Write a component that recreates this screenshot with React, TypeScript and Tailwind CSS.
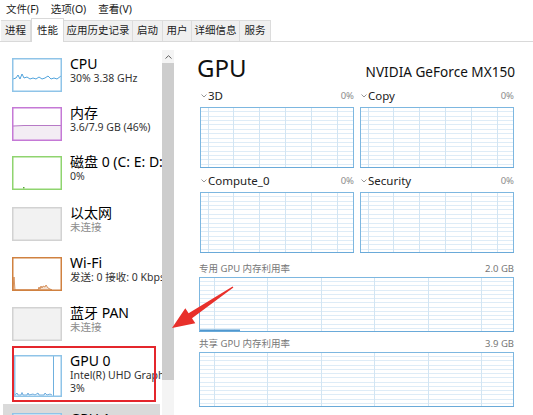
import React from "react";

const tabs = [
  { label: "进程", w: "w-[30px]" },
  { label: "性能", w: "w-[33px]", active: true },
  { label: "应用历史记录", w: "w-[69px]" },
  { label: "启动", w: "w-[30px]" },
  { label: "用户", w: "w-[29px]" },
  { label: "详细信息", w: "w-[48px]" },
  { label: "服务", w: "w-[31px]" },
];

// graph with Task Manager style grid
function Grid({
  w,
  h,
  x0,
  step,
  rows,
  usage,
}: {
  w: number;
  h: number;
  x0: number;
  step: number;
  rows: number;
  usage?: number;
}) {
  const vs: number[] = [];
  for (let x = x0; x < w - 1; x += step) vs.push(Math.round(x) + 0.5);
  const hs: number[] = [];
  for (let i = 1; i < rows; i++) hs.push(Math.round((h * i) / rows) + 0.5);
  return (
    <svg width={w} height={h} className="block">
      <rect x={0} y={0} width={w} height={h} fill="#fff" />
      {hs.map((y) => (
        <line key={"h" + y} x1={0} x2={w} y1={y} y2={y} stroke="#deecf7" />
      ))}
      {vs.map((x) => (
        <line key={"v" + x} x1={x} x2={x} y1={0} y2={h} stroke="#d2e5f3" />
      ))}
      {usage ? (
        <line x1={1} x2={usage} y1={h - 1.5} y2={h - 1.5} stroke="#4f97cf" strokeWidth={2} />
      ) : null}
      <rect x={0.5} y={0.5} width={w - 1} height={h - 1} fill="none" stroke="#7db7e0" />
      <line x1={0} x2={w} y1={h - 0.5} y2={h - 0.5} stroke="#6aaad9" />
    </svg>
  );
}

function Chevron() {
  return (
    <svg width="6" height="4" viewBox="0 0 6 4" className="block">
      <path d="M0.5 0.5 L3 3 L5.5 0.5" fill="none" stroke="#8a8a8a" strokeWidth="0.9" />
    </svg>
  );
}

function Engine({ name }: { name: string }) {
  return (
    <div>
      <div className="h-[14px] flex items-center justify-between mb-[4px]">
        <div className="flex items-center gap-[1px] ml-[1px]">
          <Chevron />
          <span className="text-[11.5px] leading-[14px] text-[#222]">{name}</span>
        </div>
        <span className="text-[9.5px] leading-[14px] text-[#8c8c8c]">0%</span>
      </div>
      <Grid w={154} h={61} x0={7.5} step={25.9} rows={14} />
    </div>
  );
}

function Thumb({
  border,
  bg = "#fff",
  w = 50,
  h = 34,
  children,
}: {
  border: string;
  bg?: string;
  w?: number;
  h?: number;
  children?: React.ReactNode;
}) {
  return (
    <svg width={w} height={h} className="block shrink-0">
      <rect x={0} y={0} width={w} height={h} fill={bg} />
      {children}
      <rect x={0.75} y={0.75} width={w - 1.5} height={h - 1.5} fill="none" stroke={border} strokeWidth={1.5} />
    </svg>
  );
}

function Item({
  title,
  sub,
  sub2,
  gray,
  thumb,
  rowH,
}: {
  title: string;
  sub: string;
  sub2?: string;
  gray?: boolean;
  thumb: React.ReactNode;
  rowH: string;
}) {
  return (
    <div className={"flex items-start gap-[8px] " + rowH}>
      {thumb}
      <div className="-mt-[3px] whitespace-nowrap">
        <div className="text-[14px] leading-[17px] text-black">{title}</div>
        <div className={"text-[10.5px] leading-[13px] " + (gray ? "text-[#8d8d8d]" : "text-[#333]")}>{sub}</div>
        {sub2 ? <div className="text-[10.5px] leading-[13px] text-[#333]">{sub2}</div> : null}
      </div>
    </div>
  );
}

function Sidebar() {
  return (
    <div className="w-[174px] flex shrink-0">
      <div className="w-[162px] relative overflow-hidden pl-[12px] pt-[16px]">
        <Item
          title="CPU"
          sub="30% 3.38 GHz"
          rowH="h-[49px]"
          thumb={
            <Thumb border="#8fc4e8">
              <polyline
                points="1,21 4,20 6,17 8,21 10,16 12,20 15,19 18,21 21,20 24,21 27,19 30,21 33,20 36,18 39,21 42,20 45,21 49,18"
                fill="none"
                stroke="#3d98d8"
                strokeWidth="0.9"
              />
            </Thumb>
          }
        />
        <Item
          title="内存"
          sub="3.6/7.9 GB (46%)"
          rowH="h-[49px]"
          thumb={
            <Thumb border="#c579d6">
              <polygon points="1,19 12,18.5 49,18.5 49,33 1,33" fill="#f3edf4" />
              <polyline points="1,19 12,18.5 49,18.5" fill="none" stroke="#a65bb9" strokeWidth="0.8" />
            </Thumb>
          }
        />
        <Item
          title="磁盘 0 (C: E: D:)"
          sub="0%"
          rowH="h-[51px]"
          thumb={
            <Thumb border="#8fd46f">
              <rect x={11} y={31} width={1.5} height={1.5} fill="#5aa83a" />
            </Thumb>
          }
        />
        <Item
          title="以太网"
          sub="未连接"
          gray
          rowH="h-[50px]"
          thumb={<Thumb border="#d2d2d2" bg="#f2f2f2" />}
        />
        <Item
          title="Wi-Fi"
          sub="发送: 0 接收: 0 Kbps"
          rowH="h-[50px]"
          thumb={
            <Thumb border="#d08140">
              <polygon
                points="1,33 2,20 3,33 26,33 27,30 28,32 29,29 30,31 31,29 33,30 34,28 36,31 38,32 40,33"
                fill="#f4e1d2"
                stroke="#c8702d"
                strokeWidth="0.7"
              />
            </Thumb>
          }
        />
        <Item
          title="蓝牙 PAN"
          sub="未连接"
          gray
          rowH="h-[48px]"
          thumb={<Thumb border="#d2d2d2" bg="#f2f2f2" />}
        />
        <Item
          title="GPU 0"
          sub="Intel(R) UHD Graphics"
          sub2="3%"
          rowH="h-[49px] ml-[2px]"
          thumb={
            <Thumb border="#8fc4e8" w={48} h={42}>
              <line x1={39.5} x2={39.5} y1={1} y2={41} stroke="#6fb0de" strokeWidth={1} />
              <polyline
                points="1,40 3,38 4,40 7,40 8,37.5 9,40 13,40 14,38 15,40 19,39 21,40 24,38 25,40 30,40 31,38 33,40 36,39 38,40"
                fill="#e6f1fa"
                stroke="#4f9bd6"
                strokeWidth="0.8"
              />
            </Thumb>
          }
        />
        <div className="-ml-[9px] pl-[9px] w-[157px] h-[40px] bg-[#dadada] pt-[9px] flex items-start gap-[8px]">
          <Thumb border="#8fc4e8" />
          <div className="-mt-[3px] text-[14px] leading-[17px] text-black whitespace-nowrap">GPU 1</div>
        </div>
        <div className="absolute left-[12px] top-[304px] w-[144px] h-[56px] border-2 border-[#e4262c]" />
      </div>
      <div className="w-[12px] flex flex-col pt-[8px]">
        <div className="h-[13px] bg-[#f4f4f4] flex items-center justify-center">
          <svg width="7" height="4" viewBox="0 0 7 4" className="block">
            <path d="M0.5 3.5 L3.5 0.7 L6.5 3.5" fill="none" stroke="#606060" strokeWidth="1" />
          </svg>
        </div>
        <div className="h-[317px] bg-[#cdcdcd]" />
        <div className="flex-1 bg-[#f4f4f4]" />
      </div>
    </div>
  );
}

function GpuPanel() {
  return (
    <div className="flex-1 pl-[26px] pr-[19px] pt-[14px]">
      <div className="flex items-baseline justify-between -ml-[3px] h-[24px]">
        <div className="text-[24px] leading-[24px] text-[#111]">GPU</div>
        <div className="text-[13.6px] leading-[24px] text-[#111] -mr-[1px]">NVIDIA GeForce MX150</div>
      </div>
      <div className="mt-[9px] grid grid-cols-2 gap-x-[6px]">
        <Engine name="3D" />
        <Engine name="Copy" />
      </div>
      <div className="mt-[6px] grid grid-cols-2 gap-x-[6px]">
        <Engine name="Compute_0" />
        <Engine name="Security" />
      </div>
      <div className="-ml-[1px] mt-[10px]">
        <div className="h-[12px] flex items-center justify-between mb-[2px] text-[9.5px] text-[#777]">
          <span>专用 GPU 内存利用率</span>
          <span>2.0 GB</span>
        </div>
        <Grid w={315} h={55} x0={15} step={53.4} rows={13} usage={41} />
        <div className="h-[12px] mt-[6px] flex items-center justify-between mb-[2px] text-[9.5px] text-[#777]">
          <span>共享 GPU 内存利用率</span>
          <span>3.9 GB</span>
        </div>
        <Grid w={315} h={55} x0={15} step={53.4} rows={13} />
      </div>
    </div>
  );
}

export default function App() {
  return (
    <div className="w-[533px] h-[415px] overflow-hidden bg-white relative flex flex-col text-[#1a1a1a] font-['Noto_Sans','Noto_Sans_CJK_SC',sans-serif]">
      <div className="h-[20px] flex items-center pl-[6px] gap-[12px] text-[10.5px] text-[#222]">
        <span>文件(F)</span>
        <span>选项(O)</span>
        <span>查看(V)</span>
      </div>
      <div className="h-[22px] flex items-end border-b border-[#d9d9d9] pl-[1px]">
        {tabs.map((t) => (
          <div
            key={t.label}
            className={
              t.w +
              " flex items-center justify-center text-[10.5px] text-[#222] " +
              (t.active
                ? "h-[24px] bg-white border-x border-t border-[#d9d9d9] -mb-px"
                : "h-[21px] bg-[#f0f0f0] border-r border-t border-[#dcdcdc]")
            }
          >
            {t.label}
          </div>
        ))}
      </div>
      <div className="flex flex-1 min-h-0">
        <Sidebar />
        <GpuPanel />
      </div>
      <svg width="533" height="415" className="absolute left-0 top-0 pointer-events-none">
        <polygon
          points="232.6,286.4 188.6,313.2 185.3,308.2 172,328 195.3,323.2 192,318.2 233.4,287.6"
          fill="#e8302b"
        />
      </svg>
    </div>
  );
}
